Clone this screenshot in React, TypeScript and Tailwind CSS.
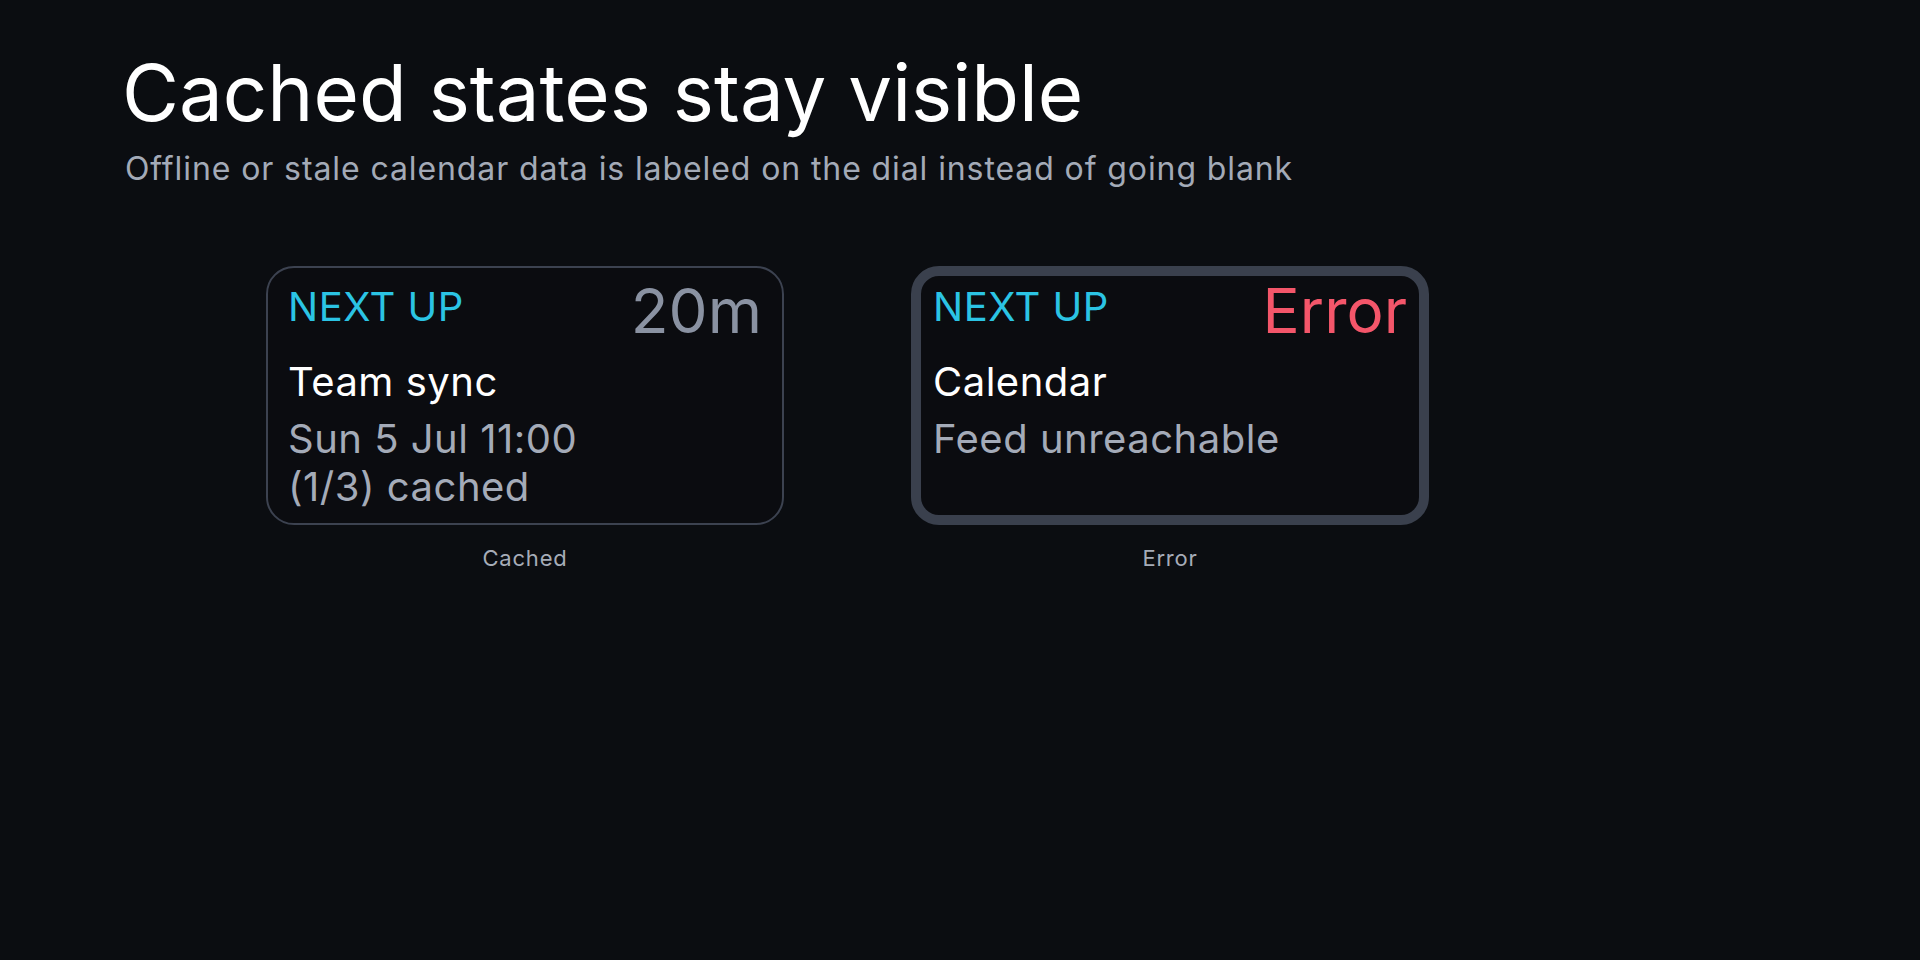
import React from "react";

interface DialState {
  label: string;
  badge: string;
  badgeTone: "muted" | "error";
  title: string;
  lines: string[];
  heavy?: boolean;
}

const states: DialState[] = [
  {
    label: "Cached",
    badge: "20m",
    badgeTone: "muted",
    title: "Team sync",
    lines: ["Sun 5 Jul 11:00", "(1/3) cached"],
  },
  {
    label: "Error",
    badge: "Error",
    badgeTone: "error",
    title: "Calendar",
    lines: ["Feed unreachable"],
    heavy: true,
  },
];

function Dial({ state }: { state: DialState }) {
  return (
    <div className="flex flex-col items-center">
      <div
        className={
          state.heavy
            ? "flex h-[259px] w-[518px] flex-col rounded-[28px] border-[10px] border-[#3a404d] bg-[#0b0c10] px-[12px] pt-[4px]"
            : "flex h-[259px] w-[518px] flex-col rounded-[28px] border-2 border-[#3c4250] bg-[#0b0c10] px-[20px] pt-[12px]"
        }
      >
        {/* Header row */}
        <div className="flex items-start justify-between">
          <span className="mt-[7px] text-[40px] leading-none tracking-[0.5px] text-[#2bc4e4]">
            NEXT UP
          </span>
          <span
            className={
              state.badgeTone === "error"
                ? "text-[62px] leading-none text-[#f4566a]"
                : "text-[62px] leading-none text-[#8a92a2]"
            }
          >
            {state.badge}
          </span>
        </div>

        <p className="mt-[20px] text-[40px] leading-none tracking-[0.5px] text-white">
          {state.title}
        </p>

        <div className="mt-[13px] text-[40px] leading-[48px] tracking-[0.5px] text-[#a4abb8]">
          {state.lines.map((line) => (
            <p key={line}>{line}</p>
          ))}
        </div>
      </div>
      <p className="mt-[22px] text-[22px] leading-none tracking-[0.8px] text-[#a6acb8]">
        {state.label}
      </p>
    </div>
  );
}

export default function App() {
  return (
    <div className="min-h-screen w-full bg-[#0b0d11] font-['Inter',sans-serif] text-white">
      <div className="pl-[122px] pt-[54px]">
        <h1 className="text-[78px] leading-none font-normal text-white">
          Cached states stay visible
        </h1>
        <p className="mt-[21px] ml-[3px] text-[32px] leading-none tracking-[0.9px] text-[#a3aab7]">
          Offline or stale calendar data is labeled on the dial instead of going blank
        </p>
      </div>

      <div className="mt-[81px] flex gap-[127px] pl-[266px]">
        {states.map((s) => (
          <Dial key={s.label} state={s} />
        ))}
      </div>
    </div>
  );
}
